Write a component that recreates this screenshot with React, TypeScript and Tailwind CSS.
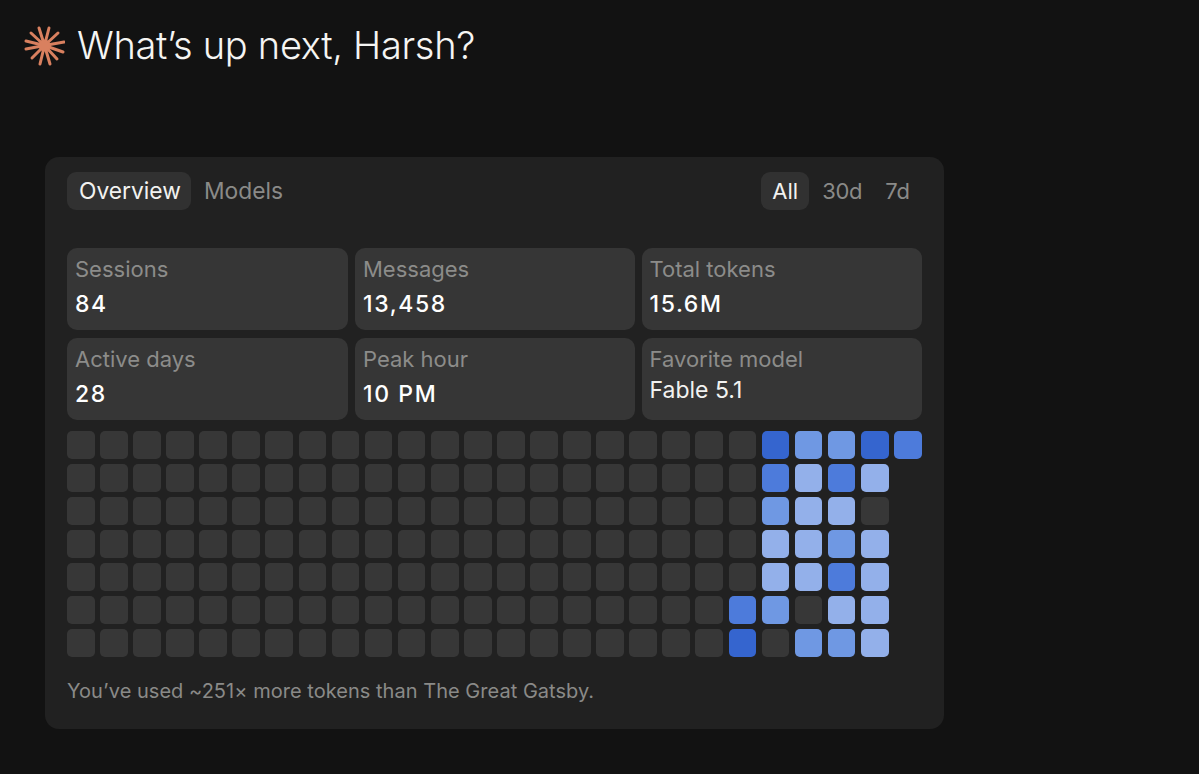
const E = "bg-[#373737]";
const D = "bg-[#3565cf]";
const B = "bg-[#4d7bdb]";
const M = "bg-[#6f98e3]";
const L = "bg-[#93b0ea]";

const hot: (string | null)[][] = [
  [E, D, M, M, D, B],
  [E, B, L, B, L, null],
  [E, M, L, L, E, null],
  [E, L, L, M, L, null],
  [E, L, L, B, L, null],
  [B, M, E, L, L, null],
  [D, E, M, M, L, null],
];

const stats = [
  { label: "Sessions", value: "84" },
  { label: "Messages", value: "13,458" },
  { label: "Total tokens", value: "15.6M" },
  { label: "Active days", value: "28" },
  { label: "Peak hour", value: "10 PM" },
  { label: "Favorite model", value: "Fable 5.1", plain: true },
];

function Burst() {
  const rays = [
    [15, 3],
    [25, 3],
    [34, 8],
    [40, 17],
    [39, 27],
    [33, 34],
    [26, 39],
    [16, 39],
    [8, 33],
    [2, 24],
    [2, 16],
    [7, 8],
  ];
  return (
    <svg width="41" height="41" viewBox="0 0 41 41" className="shrink-0">
      {rays.map(([x, y], i) => (
        <line key={i} x1="20.5" y1="20.5" x2={x} y2={y} stroke="#d9805f" strokeWidth="3" strokeLinecap="round" />
      ))}
      <circle cx="20.5" cy="20.5" r="6" fill="#d9805f" />
    </svg>
  );
}

export default function App() {
  return (
    <div className="min-h-[774px] bg-[#121212] text-white font-['Inter',sans-serif] overflow-hidden">
      <div className="flex items-center gap-[12px] pl-[24px] pt-[24px] h-[42px] box-content">
        <Burst />
        <h1 className="text-[38px] leading-[42px] font-light tracking-[-0.3px] text-[#f5f5f3]">What’s up next, Harsh?</h1>
      </div>
      <div className="ml-[45px] mt-[91px] w-[899px] h-[572px] rounded-[14px] bg-[#212121] px-[22px] pt-[15px]">
        <div className="flex items-center justify-between h-[38px]">
          <div className="flex items-center gap-[13px] text-[22.8px]">
            <span className="rounded-[9px] bg-[#313131] pl-[12px] pr-[10px] h-[38px] pt-[1px] flex items-center text-[#f2f2f0]">Overview</span>
            <span className="text-[#8a8a88] pt-[1px]">Models</span>
          </div>
          <div className="flex items-center gap-[13px] text-[22px] pr-[12px]">
            <span className="rounded-[9px] bg-[#313131] px-[11px] h-[38px] flex items-center text-[#f2f2f0]">All</span>
            <span className="text-[#8a8a88] tracking-[-0.3px]">30d</span>
            <span className="text-[#8a8a88] ml-[10px]">7d</span>
          </div>
        </div>
        <div className="mt-[38px] grid grid-cols-[281px_279.5px_280.5px] gap-x-[7px] gap-y-[8px]">
          {stats.map((s) => (
            <div key={s.label} className="h-[82px] rounded-[10px] bg-[#363636] px-[8px] pt-[7px]">
              <div className="text-[22px] leading-[28px] text-[#8c8c8a]">{s.label}</div>
              <div className={s.plain ? "mt-[3px] text-[23px] leading-[28px] text-[#f2f2f0]" : "mt-[7px] text-[23px] leading-[28px] font-medium tracking-[1.6px] text-white"}>
                {s.value}
              </div>
            </div>
          ))}
        </div>
        <div className="mt-[11px] grid grid-cols-[repeat(26,27.7px)] grid-rows-[repeat(7,27.5px)] gap-x-[5.4px] gap-y-[5.5px]">
          {hot.flatMap((row, r) => [
            ...Array.from({ length: 20 }, (_, c) => (
              <div key={`${r}-${c}`} className="rounded-[5px] bg-[#373737]" />
            )),
            ...row.map((cls, c) =>
              cls ? <div key={`${r}h${c}`} className={`rounded-[5px] ${cls}`} /> : <div key={`${r}h${c}`} />
            ),
          ])}
        </div>
        <p className="mt-[20px] text-[20px] leading-[28px] tracking-[0.03px] text-[#8a8a88]">You’ve used ~251× more tokens than The Great Gatsby.</p>
      </div>
    </div>
  );
}
